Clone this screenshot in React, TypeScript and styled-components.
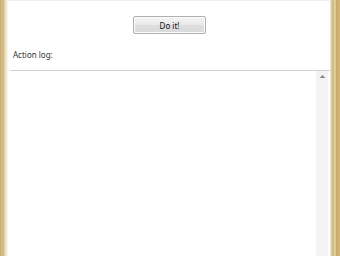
import React from "react";
import styled, { createGlobalStyle } from "styled-components";

const Global = createGlobalStyle`
  html, body { margin: 0; padding: 0; background: #ffffff; }
  body { width: 340px; height: 256px; overflow: hidden; font-family: "Segoe UI", "Noto Sans", "Liberation Sans", sans-serif; }
`;

const Window = styled.div`
  display: flex;
  width: 340px;
  height: 256px;
`;

const Frame = styled.div<{ $w: number; $side: "left" | "right" }>`
  width: ${(p) => p.$w}px;
  flex: none;
  background: ${(p) =>
    p.$side === "left"
      ? "linear-gradient(90deg, #c2a66c 0px, #dcc58e 2px, #cdb074 3px, #ecddb0 5px, #f6efdb 7px, #fcfaf2 8px)"
      : "linear-gradient(90deg, #f5f3ee 0px, #ddd6c6 1px, #cdb274 3px, #ead8a2 5px, #bea056 7px, #d9c184 9px, #c6a664 10px)"};
`;

const Content = styled.div`
  flex: 1;
  display: flex;
  flex-direction: column;
  background: #ffffff;
  min-width: 0;
  border-top: 1px solid #f0f0f0;
`;

const ButtonRow = styled.div`
  display: flex;
  justify-content: center;
  padding-top: 15px;
  height: 18px;
`;

const Button = styled.button`
  width: 73px;
  height: 18px;
  margin-left: 1px;
  border: 1px solid #b0b0b0;
  border-radius: 2px;
  background: linear-gradient(#f4f4f4, #e9e9e9 50%, #dedede 51%, #dadada);
  font-family: "Segoe UI", "Noto Sans", "Liberation Sans", sans-serif;
  font-size: 8px;
  color: #111;
  padding: 0;
  box-shadow: inset 0 0 0 1px #fafafa;
`;

const Label = styled.div`
  font-size: 8px;
  color: #333;
  padding: 15px 0 0 5px;
  height: 12px;
  line-height: 12px;
`;

const LogBox = styled.div`
  margin: 9px 0 0 2px;
  flex: 1;
  border-top: 1px solid #d2d2d2;
  display: flex;
`;

const LogArea = styled.div`
  flex: 1;
  background: #ffffff;
`;

const Scrollbar = styled.div`
  width: 12px;
  margin-right: 2px;
  background: #f3f3f3;
  display: flex;
  flex-direction: column;
  align-items: center;
  padding-top: 3px;
`;

export default function App() {
  return (
    <>
      <Global />
      <Window>
        <Frame $w={8} $side="left" />
        <Content>
          <ButtonRow>
            <Button>Do it!</Button>
          </ButtonRow>
          <Label>Action log:</Label>
          <LogBox>
            <LogArea />
            <Scrollbar>
              <svg width="7" height="5" viewBox="0 0 7 5">
                <path d="M0.5 4 L3.5 1 L6.5 4 Z" fill="#8a8a8a" />
              </svg>
            </Scrollbar>
          </LogBox>
        </Content>
        <Frame $w={10} $side="right" />
      </Window>
    </>
  );
}
